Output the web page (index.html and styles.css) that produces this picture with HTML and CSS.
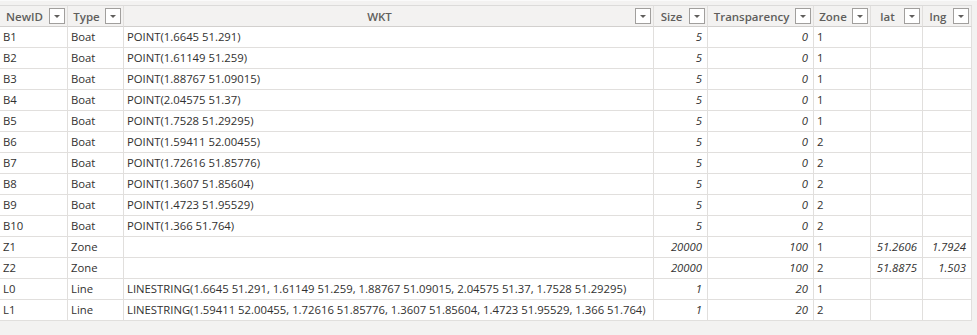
FILE: index.html
```html
<!DOCTYPE html>
<html>
<head>
<meta charset="utf-8">
<link rel="stylesheet" href="styles.css">
</head>
<body>
<div class="topband"></div>
<div class="grid">
  <div class="h"><span class="ht">NewID</span><span class="dd"></span></div>
  <div class="h"><span class="ht">Type</span><span class="dd"></span></div>
  <div class="h"><span class="ht">WKT</span><span class="dd"></span></div>
  <div class="h"><span class="ht">Size</span><span class="dd"></span></div>
  <div class="h"><span class="ht">Transparency</span><span class="dd"></span></div>
  <div class="h"><span class="ht">Zone</span><span class="dd"></span></div>
  <div class="h"><span class="ht">lat</span><span class="dd"></span></div>
  <div class="h"><span class="ht">lng</span><span class="dd"></span></div>

  <div class="c">B1</div><div class="c">Boat</div><div class="c">POINT(1.6645 51.291)</div><div class="c n">5</div><div class="c n">0</div><div class="c">1</div><div class="c n"></div><div class="c n"></div>
  <div class="c">B2</div><div class="c">Boat</div><div class="c">POINT(1.61149 51.259)</div><div class="c n">5</div><div class="c n">0</div><div class="c">1</div><div class="c n"></div><div class="c n"></div>
  <div class="c">B3</div><div class="c">Boat</div><div class="c">POINT(1.88767 51.09015)</div><div class="c n">5</div><div class="c n">0</div><div class="c">1</div><div class="c n"></div><div class="c n"></div>
  <div class="c">B4</div><div class="c">Boat</div><div class="c">POINT(2.04575 51.37)</div><div class="c n">5</div><div class="c n">0</div><div class="c">1</div><div class="c n"></div><div class="c n"></div>
  <div class="c">B5</div><div class="c">Boat</div><div class="c">POINT(1.7528 51.29295)</div><div class="c n">5</div><div class="c n">0</div><div class="c">1</div><div class="c n"></div><div class="c n"></div>
  <div class="c">B6</div><div class="c">Boat</div><div class="c">POINT(1.59411 52.00455)</div><div class="c n">5</div><div class="c n">0</div><div class="c">2</div><div class="c n"></div><div class="c n"></div>
  <div class="c">B7</div><div class="c">Boat</div><div class="c">POINT(1.72616 51.85776)</div><div class="c n">5</div><div class="c n">0</div><div class="c">2</div><div class="c n"></div><div class="c n"></div>
  <div class="c">B8</div><div class="c">Boat</div><div class="c">POINT(1.3607 51.85604)</div><div class="c n">5</div><div class="c n">0</div><div class="c">2</div><div class="c n"></div><div class="c n"></div>
  <div class="c">B9</div><div class="c">Boat</div><div class="c">POINT(1.4723 51.95529)</div><div class="c n">5</div><div class="c n">0</div><div class="c">2</div><div class="c n"></div><div class="c n"></div>
  <div class="c">B10</div><div class="c">Boat</div><div class="c">POINT(1.366 51.764)</div><div class="c n">5</div><div class="c n">0</div><div class="c">2</div><div class="c n"></div><div class="c n"></div>
  <div class="c">Z1</div><div class="c">Zone</div><div class="c"></div><div class="c n">20000</div><div class="c n">100</div><div class="c">1</div><div class="c n">51.2606</div><div class="c n">1.7924</div>
  <div class="c">Z2</div><div class="c">Zone</div><div class="c"></div><div class="c n">20000</div><div class="c n">100</div><div class="c">2</div><div class="c n">51.8875</div><div class="c n">1.503</div>
  <div class="c">L0</div><div class="c">Line</div><div class="c">LINESTRING(1.6645 51.291, 1.61149 51.259, 1.88767 51.09015, 2.04575 51.37, 1.7528 51.29295)</div><div class="c n">1</div><div class="c n">20</div><div class="c">1</div><div class="c n"></div><div class="c n"></div>
  <div class="c">L1</div><div class="c">Line</div><div class="c">LINESTRING(1.59411 52.00455, 1.72616 51.85776, 1.3607 51.85604, 1.4723 51.95529, 1.366 51.764)</div><div class="c n">1</div><div class="c n">20</div><div class="c">2</div><div class="c n"></div><div class="c n"></div>
</div>
</body>
</html>
```

FILE: styles.css
```css
html, body {
  margin: 0;
  padding: 0;
  background: #f3f2f1;
  width: 977px;
  height: 335px;
  overflow: hidden;
}

.topband {
  height: 5px;
  background: #f3f2f1;
  border-top: 1px solid #fafafa;
  box-sizing: border-box;
}

.grid {
  display: grid;
  grid-template-columns: 68px 56px 530px 54px 106px 57px 52px 49px;
  grid-auto-rows: 21px;
  width: 972px;
  border-top: 1px solid #dcdbda;
  font-family: "Open Sans", "Liberation Sans", sans-serif;
  font-size: 11.3px;
}

.h {
  box-sizing: border-box;
  background: #f3f2f1;
  border-right: 1px solid #e1dfdd;
  border-bottom: 1px solid #d2d0ce;
  display: flex;
  align-items: center;
  padding: 0 2px 0 2px;
}

.ht {
  flex: 1;
  text-align: center;
  font-weight: 600;
  color: #605e5c;
  font-size: 11.5px;
  white-space: nowrap;
}

.dd {
  box-sizing: border-box;
  width: 16px;
  height: 16px;
  border: 1px solid #a19f9d;
  background: #ffffff;
  flex: none;
  position: relative;
  margin-left: 2px;
}

.dd::after {
  content: "";
  position: absolute;
  left: 4px;
  top: 6px;
  border-left: 3px solid transparent;
  border-right: 3px solid transparent;
  border-top: 3px solid #605e5c;
}

.c {
  box-sizing: border-box;
  background: #ffffff;
  border-right: 1px solid #e1dfdd;
  border-bottom: 1px solid #e1dfdd;
  padding: 0 3px;
  line-height: 20px;
  color: #323130;
  white-space: nowrap;
  overflow: hidden;
}

.n {
  text-align: right;
  font-style: italic;
  padding-right: 5px;
}
```
